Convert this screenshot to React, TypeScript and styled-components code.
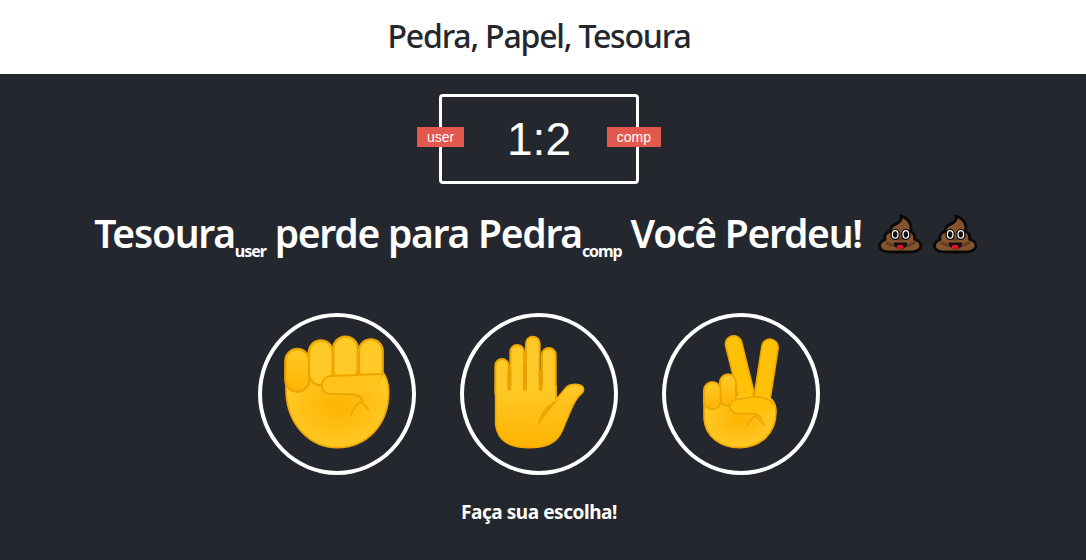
import React from "react";
import styled, { createGlobalStyle } from "styled-components";

const Global = createGlobalStyle`
  html, body { margin: 0; padding: 0; background: #24272e; }
  body { font-family: "Noto Sans", "Open Sans", sans-serif; }
`;
const Page = styled.div`
  min-height: 560px;
  background: #24272e;
  color: #fff;
  display: flex;
  flex-direction: column;
`;
const Header = styled.header`
  height: 74px;
  padding: 0 8px 4px 0;
  box-sizing: border-box;
  background: #fff;
  color: #24272e;
  display: flex;
  align-items: center;
  justify-content: center;
  font-size: 32px;
  font-weight: 500;
  letter-spacing: -1.2px;
`;
const Main = styled.main`
  padding-right: 8px;
  display: flex;
  flex-direction: column;
  align-items: center;
`;
const Board = styled.div`
  position: relative;
  box-sizing: border-box;
  margin-top: 20px;
  width: 200px;
  height: 90px;
  border: 3px solid #fff;
  border-radius: 4px;
  display: flex;
  align-items: center;
  justify-content: center;
  font-family: "Liberation Sans", Arial, sans-serif;
  font-size: 46px;
`;
const Badge = styled.div<{ $side: "left" | "right" }>`
  position: absolute;
  top: 30px;
  ${(p) => (p.$side === "left" ? "left: -25px;" : "right: -25px;")}
  height: 20px;
  padding: 0 10px;
  background: #e2584d;
  font-size: 14px;
  line-height: 20px;
`;
const Result = styled.div`
  margin-top: 20px;
  height: 56px;
  padding-right: 5px;
  display: flex;
  align-items: center;
  font-size: 39px;
  font-weight: 600;
  letter-spacing: -1.25px;
  white-space: pre;
`;
const Small = styled.sub`
  font-size: 16px;
  font-weight: 700;
  letter-spacing: -1.05px;
  align-self: flex-end;
  position: relative;
  top: -1px;
  line-height: 1;
  vertical-align: baseline;
`;
const Poop = styled.svg<{ $gap: number }>`
  width: 47px;
  height: 41px;
  margin: 3px 0 0 ${(p) => p.$gap}px;
  flex: none;
`;
const Choices = styled.div`
  margin-top: 53px;
  display: flex;
  gap: 44px;
`;
const Choice = styled.div`
  box-sizing: border-box;
  width: 158px;
  height: 162px;
  border: 4px solid #fff;
  border-radius: 50%;
  display: flex;
  align-items: center;
  justify-content: center;
`;
const Hand = styled.svg`
  width: 120px;
  height: 120px;
  flex: none;
`;
const Message = styled.div`
  margin-top: 24px;
  font-size: 19px;
  font-weight: 700;
  letter-spacing: -0.45px;
`;

const HandDefs = () => (
  <defs>
    <radialGradient id="palmFill" cx="0.5" cy="0.48" r="0.55">
      <stop offset="0" stopColor="#ffb300" />
      <stop offset="1" stopColor="#ffca28" />
    </radialGradient>
    <linearGradient id="fingerFill" x1="0" y1="0" x2="0" y2="1">
      <stop offset="0" stopColor="#ffca28" />
      <stop offset="1" stopColor="#ffb300" />
    </linearGradient>
  </defs>
);

const edge = "#eda600";

const Fist = () => (
  <Hand viewBox="81 87 360 360">
    <HandDefs />
    <path d="M108 190V260C112 360 180 428 262 428C350 428 416 360 416 262C416 235 410 215 398 200Z" fill="url(#palmFill)" stroke={edge} strokeWidth="5" />
    <rect x="106" y="132" width="72" height="128" rx="36" fill="url(#fingerFill)" stroke={edge} strokeWidth="7" />
    <rect x="177" y="106" width="71" height="135" rx="35" fill="#ffca28" stroke={edge} strokeWidth="7" />
    <rect x="250" y="95" width="73" height="135" rx="36" fill="#ffca28" stroke={edge} strokeWidth="7" />
    <rect x="327" y="103" width="71" height="130" rx="35" fill="#ffca28" stroke={edge} strokeWidth="7" />
    <path d="M240 213L392 207C396 215 396 225 392 234C360 258 335 268 300 268H245C222 266 212 252 216 235C219 222 228 215 240 213Z" fill="#ffc31c" />
    <path d="M392 207L240 213C228 215 219 222 216 235C212 252 222 266 245 268H300C320 268 332 274 340 290" fill="none" stroke={edge} strokeWidth="6" />
    <path d="M303 332C308 312 318 298 332 290C342 296 350 306 356 316" fill="none" stroke={edge} strokeWidth="5" />
  </Hand>
);

const Palm = () => (
  <Hand viewBox="87 87 360 360">
    <HandDefs />
    <rect x="136" y="162" width="40" height="120" rx="20" fill="#ffca28" stroke={edge} strokeWidth="6" />
    <rect x="181" y="120" width="41" height="160" rx="20" fill="#ffca28" stroke={edge} strokeWidth="6" />
    <rect x="228" y="95" width="41" height="180" rx="20" fill="#ffca28" stroke={edge} strokeWidth="6" />
    <rect x="276" y="129" width="41" height="160" rx="20" fill="#ffca28" stroke={edge} strokeWidth="6" />
    <path d="M137 240H317V282C330 274 338 258 350 246C362 236 385 236 396 243C403 250 402 260 392 268C372 282 362 320 345 356C330 400 310 428 240 428C180 428 145 410 137 360Z" fill="url(#fingerFill)" />
    <path d="M137 240V360C145 410 180 428 240 428C310 428 330 400 345 356C362 320 372 282 392 268C402 260 403 250 396 243C385 236 362 236 350 246C338 258 330 274 318 282V240" fill="none" stroke="#f2ab00" strokeWidth="5" />
    <path d="M178 200V251M225 180V251M272 200V251" stroke="#e8a200" strokeWidth="12" strokeLinecap="round" />
    <path d="M265 358C272 325 290 300 322 286C300 310 285 330 265 358Z" fill="#eda600" stroke="#eda600" strokeWidth="3" strokeLinejoin="round" />
  </Hand>
);

const Victory = () => (
  <Hand viewBox="87 87 360 360">
    <HandDefs />
    <path d="M245 117L281 262" stroke={edge} strokeWidth="54" strokeLinecap="round" />
    <path d="M245 117L281 262" stroke="#ffc107" strokeWidth="44" strokeLinecap="round" />
    <path d="M354 127L332 268" stroke={edge} strokeWidth="54" strokeLinecap="round" />
    <path d="M354 127L332 268" stroke="#ffc107" strokeWidth="44" strokeLinecap="round" />
    <path d="M156 260V340C160 395 205 428 262 428C325 428 372 385 372 320C372 300 366 285 352 275L240 270Z" fill="url(#palmFill)" />
    <path d="M156 260V340C160 395 205 428 262 428C325 428 372 385 372 320C372 302 367 290 358 282" fill="none" stroke={edge} strokeWidth="5" />
    <rect x="204" y="208" width="48" height="95" rx="24" fill="url(#fingerFill)" stroke={edge} strokeWidth="6" />
    <rect x="156" y="231" width="50" height="82" rx="25" fill="url(#fingerFill)" stroke={edge} strokeWidth="6" />
    <path d="M248 285L300 276C325 274 350 278 364 298C366 306 366 312 360 316C345 324 325 326 300 326H255C232 322 224 296 248 285Z" fill="#ffc107" />
    <path d="M364 298C350 278 325 274 300 276L248 285C224 296 232 322 255 326H300C312 326 322 330 330 344" fill="none" stroke={edge} strokeWidth="5" />
    <path d="M285 362C290 350 298 342 307 334C320 340 330 350 337 362" fill="none" stroke={edge} strokeWidth="5" />
  </Hand>
);

const PoopIcon = ({ gap }: { gap: number }) => (
  <Poop $gap={gap} viewBox="50 40 150 130">
    <path d="M125 48C132 60 122 70 108 76C98 80 92 88 92 98C78 102 72 112 76 124C62 130 55 140 60 152C64 162 80 164 100 164H150C172 164 188 160 190 146C191 134 180 126 170 124C172 112 166 102 156 98C162 80 156 60 125 48Z" fill="#85542f" stroke="#0a0a0a" strokeWidth="9" strokeLinejoin="round" />
    <path d="M96 112C115 128 140 126 158 110M78 134C110 152 150 150 172 132" stroke="#633d21" strokeWidth="9" fill="none" />
    <ellipse cx="108" cy="108" rx="13" ry="16" fill="#fff" stroke="#0a0a0a" strokeWidth="4" />
    <ellipse cx="142" cy="108" rx="13" ry="16" fill="#fff" stroke="#0a0a0a" strokeWidth="4" />
    <ellipse cx="108" cy="108" rx="7" ry="10" fill="#111" />
    <ellipse cx="142" cy="108" rx="7" ry="10" fill="#111" />
    <path d="M103 134H147C146 148 136 156 125 156C114 156 104 148 103 134Z" fill="#111" />
    <ellipse cx="124" cy="148" rx="11" ry="7" fill="#e0132d" />
  </Poop>
);

export default function App() {
  return (
    <Page>
      <Global />
      <Header>Pedra, Papel, Tesoura</Header>
      <Main>
        <Board>
          <Badge $side="left">user</Badge>
          <Badge $side="right">comp</Badge>
          1:2
        </Board>
        <Result>
          Tesoura<Small>user</Small> perde para Pedra<Small>comp</Small> Você Perdeu!<PoopIcon gap={15} />
          <PoopIcon gap={8} />
        </Result>
        <Choices>
          <Choice><Fist /></Choice>
          <Choice><Palm /></Choice>
          <Choice><Victory /></Choice>
        </Choices>
        <Message>Faça sua escolha!</Message>
      </Main>
    </Page>
  );
}
